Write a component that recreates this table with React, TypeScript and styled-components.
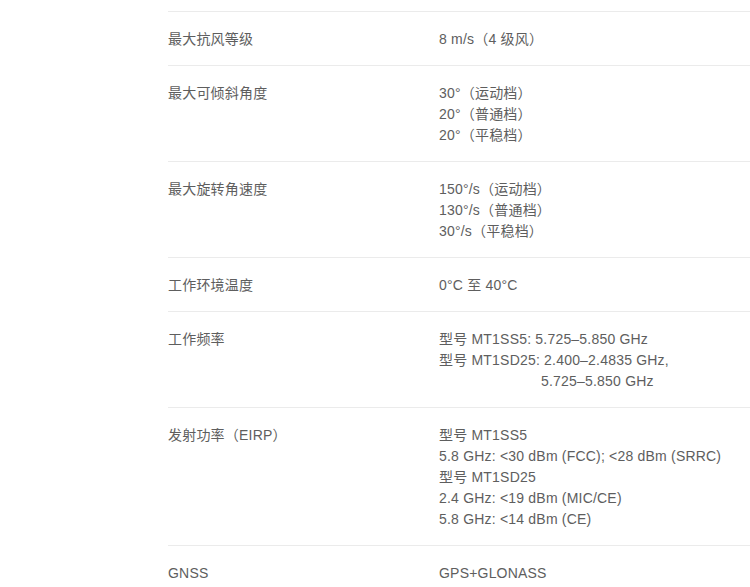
import React from 'react';
import styled, { createGlobalStyle } from 'styled-components';

const GlobalStyle = createGlobalStyle`
    html, body {
        margin: 0;
        padding: 0;
        background: #ffffff;
    }
    body {
        font-family: 'Liberation Sans', 'Noto Sans CJK SC', sans-serif;
        -webkit-font-smoothing: antialiased;
    }
`;

const Page = styled.div`
    padding: 11px 0 0 168px;
    width: 750px;
    box-sizing: border-box;
    overflow: hidden;
`;

const SpecRow = styled.div`
    display: grid;
    grid-template-columns: 271px 1fr;
    border-top: 1px solid #ebebeb;
    padding: 17px 0 15px;
    font-size: 14px;
    line-height: 21px;
    letter-spacing: 0.2px;
    color: #5e5e5e;
`;

const Label = styled.div`
    white-space: nowrap;
`;

const Values = styled.div`
    display: flex;
    flex-direction: column;
    white-space: nowrap;
`;

const Line = styled.span<{ $indent?: number }>`
    padding-left: ${({ $indent }) => $indent || 0}px;
`;

type Spec = {
    label: string,
    lines: { text: string, indent?: number }[],
}

const specs: Spec[] = [
    { label: '最大抗风等级', lines: [{ text: '8 m/s（4 级风）' }] },
    { label: '最大可倾斜角度', lines: [
        { text: '30°（运动档）' },
        { text: '20°（普通档）' },
        { text: '20°（平稳档）' },
    ] },
    { label: '最大旋转角速度', lines: [
        { text: '150°/s（运动档）' },
        { text: '130°/s（普通档）' },
        { text: '30°/s（平稳档）' },
    ] },
    { label: '工作环境温度', lines: [{ text: '0°C 至 40°C' }] },
    { label: '工作频率', lines: [
        { text: '型号 MT1SS5: 5.725–5.850 GHz' },
        { text: '型号 MT1SD25: 2.400–2.4835 GHz,' },
        { text: '5.725–5.850 GHz', indent: 102 },
    ] },
    { label: '发射功率（EIRP）', lines: [
        { text: '型号 MT1SS5' },
        { text: '5.8 GHz: <30 dBm (FCC); <28 dBm (SRRC)' },
        { text: '型号 MT1SD25' },
        { text: '2.4 GHz: <19 dBm (MIC/CE)' },
        { text: '5.8 GHz: <14 dBm (CE)' },
    ] },
    { label: 'GNSS', lines: [{ text: 'GPS+GLONASS' }] },
];

const App: React.FC = () => {
    return(
        <>
            <GlobalStyle />
            <Page>
                {specs.map((spec) => (
                    <SpecRow key={spec.label}>
                        <Label>{spec.label}</Label>
                        <Values>
                            {spec.lines.map((line, i) => (
                                <Line key={i} $indent={line.indent}>{line.text}</Line>
                            ))}
                        </Values>
                    </SpecRow>
                ))}
            </Page>
        </>
    );
}

export default App;
